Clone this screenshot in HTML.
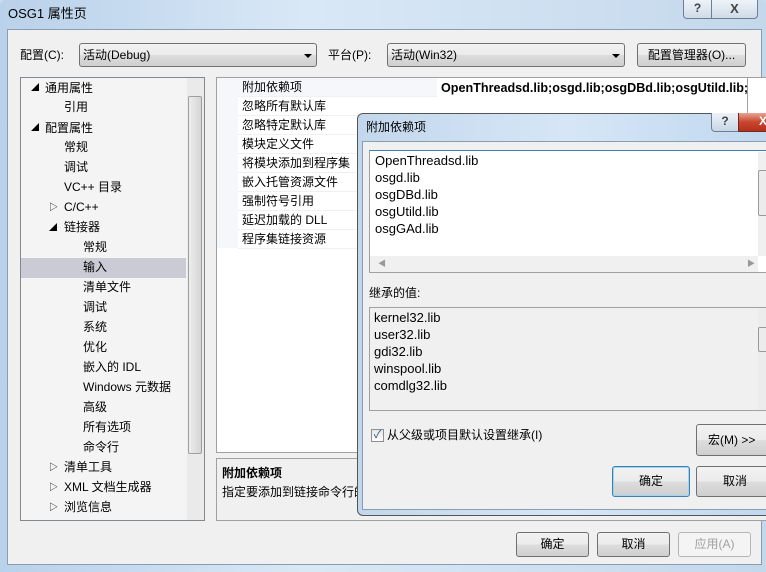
<!DOCTYPE html>
<html><head><meta charset="utf-8"><style>
*{box-sizing:border-box;margin:0;padding:0}
body{width:766px;height:572px;overflow:hidden;position:relative;background:#c9dcef;font-family:"Liberation Sans","Noto Sans CJK SC",sans-serif;font-size:12px;color:#000}
.a{position:absolute}
.t{position:absolute;white-space:nowrap;line-height:14px}
.btn{position:absolute;border:1px solid #707070;border-radius:3px;background:linear-gradient(#f2f2f2,#ebebeb 50%,#dddddd 51%,#cfcfcf);text-align:center;font-size:12px}
.combo{position:absolute;border:1px solid #707070;border-radius:3px;background:linear-gradient(#f2f2f2,#ebebeb 50%,#dddddd 51%,#cfcfcf)}
.arr{position:absolute;width:0;height:0;border-left:4px solid transparent;border-right:4px solid transparent;border-top:4px solid #000}
.row{position:absolute;left:238px;width:199px;height:19px;border-bottom:1px solid #f0f0f0;padding-left:4px;line-height:19px;font-size:12px}
</style></head><body>
<div class="a" style="left:0;top:0;width:766px;height:572px;background:linear-gradient(90deg,#b9d1ea,#d9e8f6 40%,#c4d8ec);border-radius:6px 6px 0 0"></div>
<div class="t" style="left:8px;top:7px;font-size:13px">OSG1 属性页</div>
<div class="a" style="left:683px;top:0;width:29px;height:19px;border:1px solid #6d7f95;border-top:none;border-radius:0 0 0 4px;background:linear-gradient(#eef3f9,#cfdbe8);text-align:center;font-size:12px;color:#444;font-weight:bold;line-height:17px">?</div>
<div class="a" style="left:712px;top:0;width:46px;height:19px;border:1px solid #6d7f95;border-top:none;border-left:none;border-radius:0 0 4px 0;background:linear-gradient(#eef3f9,#cfdbe8);text-align:center;font-size:13px;color:#444;font-weight:bold;line-height:17px">X</div>
<div class="a" style="left:7px;top:29px;width:755px;height:536px;background:#f0f0f0;border:1px solid #8a9cb0"></div>
<div class="t" style="left:20px;top:48px">配置(C):</div>
<div class="combo" style="left:79px;top:43px;width:238px;height:24px"><div class="t" style="left:3px;top:4px">活动(Debug)</div><div class="arr" style="left:224px;top:10px"></div></div>
<div class="t" style="left:328px;top:48px">平台(P):</div>
<div class="combo" style="left:387px;top:43px;width:238px;height:24px"><div class="t" style="left:3px;top:4px">活动(Win32)</div><div class="arr" style="left:224px;top:10px"></div></div>
<div class="btn" style="left:637px;top:43px;width:109px;height:24px;line-height:22px">配置管理器(O)...</div>
<div class="a" style="left:20px;top:77px;width:185px;height:444px;background:#f4f4f4;border:1px solid #828790"></div>
<div class="a" style="left:187px;top:78px;width:17px;height:442px;background:#eaeaea"></div>
<div class="a" style="left:188px;top:96px;width:14px;height:358px;border:1px solid #a0a0a0;border-radius:2px;background:linear-gradient(90deg,#ececec,#d6d6d6)"></div>
<div class="a" style="left:21px;top:258px;width:165px;height:20px;background:#cbcbd6"></div>
<div style="font-size:12px">
<div class="t" style="left:31px;top:81px;font-size:8px">◢</div><div class="t" style="left:45px;top:81px">通用属性</div>
<div class="t" style="left:64px;top:100px">引用</div>
<div class="t" style="left:31px;top:121px;font-size:8px">◢</div><div class="t" style="left:45px;top:121px">配置属性</div>
<div class="t" style="left:64px;top:140px">常规</div>
<div class="t" style="left:64px;top:160px">调试</div>
<div class="t" style="left:64px;top:180px">VC++ 目录</div>
<div class="t" style="left:49px;top:200px;font-size:9px">▷</div><div class="t" style="left:64px;top:200px">C/C++</div>
<div class="t" style="left:49px;top:221px;font-size:8px">◢</div><div class="t" style="left:64px;top:220px">链接器</div>
<div class="t" style="left:83px;top:240px">常规</div>
<div class="t" style="left:83px;top:260px">输入</div>
<div class="t" style="left:83px;top:280px">清单文件</div>
<div class="t" style="left:83px;top:300px">调试</div>
<div class="t" style="left:83px;top:320px">系统</div>
<div class="t" style="left:83px;top:340px">优化</div>
<div class="t" style="left:83px;top:360px">嵌入的 IDL</div>
<div class="t" style="left:83px;top:380px">Windows 元数据</div>
<div class="t" style="left:83px;top:400px">高级</div>
<div class="t" style="left:83px;top:420px">所有选项</div>
<div class="t" style="left:83px;top:440px">命令行</div>
<div class="t" style="left:49px;top:460px;font-size:9px">▷</div><div class="t" style="left:64px;top:460px">清单工具</div>
<div class="t" style="left:49px;top:480px;font-size:9px">▷</div><div class="t" style="left:64px;top:480px">XML 文档生成器</div>
<div class="t" style="left:49px;top:500px;font-size:9px">▷</div><div class="t" style="left:64px;top:500px">浏览信息</div>
</div>
<div class="a" style="left:216px;top:77px;width:560px;height:376px;background:#fff;border:1px solid #a0a0a0"></div>
<div class="a" style="left:217px;top:78px;width:21px;height:170px;background:#f5f7fb"></div>
<div class="row" style="top:78px;background:#f5f7fb">附加依赖项</div>
<div class="row" style="top:97px">忽略所有默认库</div>
<div class="row" style="top:116px">忽略特定默认库</div>
<div class="row" style="top:135px">模块定义文件</div>
<div class="row" style="top:154px">将模块添加到程序集</div>
<div class="row" style="top:173px">嵌入托管资源文件</div>
<div class="row" style="top:192px">强制符号引用</div>
<div class="row" style="top:211px">延迟加载的 DLL</div>
<div class="row" style="top:230px">程序集链接资源</div>
<div class="a" style="left:441px;top:81px;width:306px;height:16px;overflow:hidden"><div class="t" style="left:0;top:0;font-weight:bold;font-size:12.6px">OpenThreadsd.lib;osgd.lib;osgDBd.lib;osgUtild.lib;osgGAd.lib</div></div>
<div class="a" style="left:747px;top:78px;width:1px;height:170px;background:#a0a0a0"></div>
<div class="a" style="left:216px;top:458px;width:560px;height:63px;background:#f0f0f0;border:1px solid #a0a0a0"></div>
<div class="t" style="left:222px;top:466px;font-weight:bold">附加依赖项</div>
<div class="t" style="left:222px;top:485px">指定要添加到链接命令行的</div>
<div class="btn" style="left:516px;top:532px;width:73px;height:25px;line-height:23px">确定</div>
<div class="btn" style="left:597px;top:532px;width:73px;height:25px;line-height:23px">取消</div>
<div class="btn" style="left:678px;top:532px;width:73px;height:25px;line-height:23px;color:#a0a0a0;border-color:#b5b5b5;background:#f4f4f4">应用(A)</div>
<div class="a" style="left:357px;top:113px;width:420px;height:403px;border:1px solid #555;border-radius:6px 0 0 6px;background:linear-gradient(90deg,#c3d7ec,#d6e6f6 50%,#c0d7ef)"></div>
<div class="t" style="left:366px;top:120px;font-size:12px">附加依赖项</div>
<div class="a" style="left:711px;top:113px;width:28px;height:19px;border:1px solid #6d7f95;border-top:none;border-radius:0 0 0 4px;background:linear-gradient(#eef3f9,#c9d6e5);text-align:center;font-weight:bold;color:#444;line-height:17px">?</div>
<div class="a" style="left:738px;top:113px;width:40px;height:19px;border:1px solid #6d2a20;border-top:none;background:linear-gradient(#e8a493,#c8452e 50%,#b5301c);color:#fff;font-weight:bold;line-height:17px;padding-left:20px">X</div>
<div class="a" style="left:362px;top:141px;width:410px;height:369px;background:#f0f0f0;border:1px solid #8a9cb0"></div>
<div class="a" style="left:369px;top:150px;width:400px;height:123px;background:#fff;border:1px solid #a0a0a0;border-top-color:#3c7fb1"></div>
<div class="a" style="left:370px;top:256px;width:388px;height:16px;background:#f0f0f0"></div>
<div class="a" style="left:758px;top:152px;width:10px;height:104px;background:#f0f0f0"></div>
<div class="a" style="left:758px;top:170px;width:10px;height:46px;border:1px solid #9a9a9a;border-radius:2px;background:#ececec"></div>
<div class="t" style="left:378px;top:257px;font-size:8px;color:#999">◀</div>
<div class="t" style="left:747px;top:257px;font-size:8px;color:#999">▶</div>
<div class="t" style="left:375px;top:154px;font-size:13px">OpenThreadsd.lib</div>
<div class="t" style="left:375px;top:171px;font-size:13px">osgd.lib</div>
<div class="t" style="left:375px;top:188px;font-size:13px">osgDBd.lib</div>
<div class="t" style="left:375px;top:205px;font-size:13px">osgUtild.lib</div>
<div class="t" style="left:375px;top:222px;font-size:13px">osgGAd.lib</div>
<div class="t" style="left:369px;top:286px">继承的值:</div>
<div class="a" style="left:369px;top:307px;width:400px;height:104px;background:#f0f0f0;border:1px solid #a0a0a0"></div>
<div class="a" style="left:758px;top:308px;width:10px;height:102px;background:#ececec"></div>
<div class="a" style="left:758px;top:327px;width:10px;height:25px;border:1px solid #9a9a9a;border-radius:2px;background:#ececec"></div>
<div class="t" style="left:374px;top:311px;font-size:13px">kernel32.lib</div>
<div class="t" style="left:374px;top:328px;font-size:13px">user32.lib</div>
<div class="t" style="left:374px;top:345px;font-size:13px">gdi32.lib</div>
<div class="t" style="left:374px;top:362px;font-size:13px">winspool.lib</div>
<div class="t" style="left:374px;top:379px;font-size:13px">comdlg32.lib</div>
<div class="a" style="left:371px;top:429px;width:13px;height:13px;border:1px solid #8e8f8f;background:linear-gradient(#e6e6e6,#fff);color:#2a4d8a;font-size:11px;line-height:11px;text-align:center">✓</div>
<div class="t" style="left:387px;top:428px;font-size:12px">从父级或项目默认设置继承(I)</div>
<div class="btn" style="left:696px;top:424px;width:80px;height:32px;line-height:30px;text-align:left;padding-left:11px">宏(M) &gt;&gt;</div>
<div class="btn" style="left:612px;top:466px;width:78px;height:31px;line-height:29px;border-color:#3c7fb1;box-shadow:inset 0 0 0 1px #9fd5f3">确定</div>
<div class="btn" style="left:696px;top:466px;width:80px;height:31px;line-height:29px;text-align:left;padding-left:26px">取消</div>
</body></html>
